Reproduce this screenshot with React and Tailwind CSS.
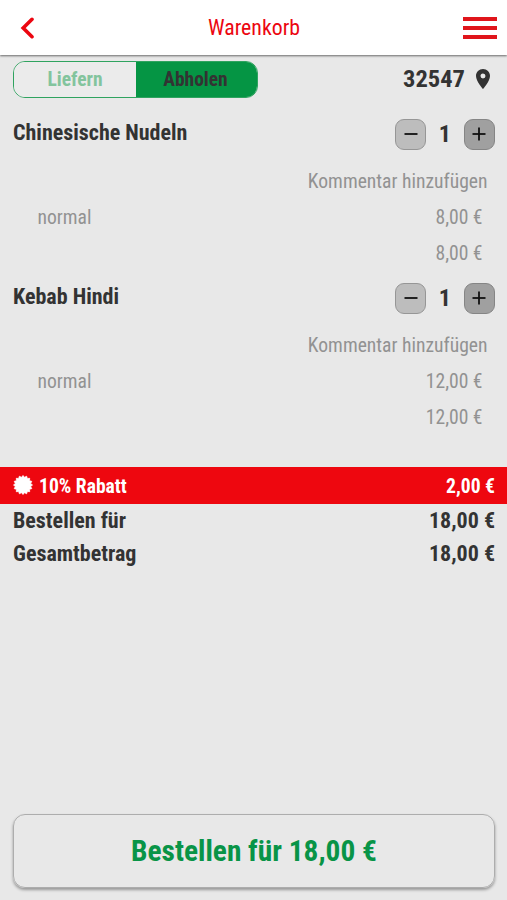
import React, { useState } from 'react';
import { MdLocationOn } from 'react-icons/md';

const initialItems = [
  { id: 1, name: 'Chinesische Nudeln', variant: 'normal', price: 8 },
  { id: 2, name: 'Kebab Hindi', variant: 'normal', price: 12 },
];

const formatPrice = (value) => `${value.toFixed(2).replace('.', ',')} €`;

// Scalloped discount badge: alternating outer and inner points
const badgePoints = [...Array(32)]
  .map((_, index) => {
    const radius = index % 2 === 0 ? 9.5 : 7.8;
    const angle = (index * Math.PI) / 16;
    return `${10 + radius * Math.sin(angle)},${10 - radius * Math.cos(angle)}`;
  })
  .join(' ');

const QuantityButton = ({ type, onClick }) => (
  <button
    onClick={onClick}
    className={`flex h-[31px] w-[31px] items-center justify-center rounded-[9px] border ${
      type === 'plus' ? 'border-[#858585] bg-[#a0a0a0]' : 'border-[#969696] bg-[#bdbdbd]'
    }`}
  >
    <svg viewBox="0 0 14 14" className="h-3.5 w-3.5" stroke="#111" strokeWidth="1.8">
      <path d="M0.5 7h13" />
      {type === 'plus' && <path d="M7 0.5v13" />}
    </svg>
  </button>
);

const CartItem = ({ item, quantity, onChange }) => (
  <div className="h-[164px] pl-[13px] pr-[12.5px] pt-[16.5px]">
    <div className="flex h-[31px] items-center justify-between">
      <h2 className="pb-[3px] text-[22px] font-bold leading-none">{item.name}</h2>
      <div className="flex items-center">
        <QuantityButton type="minus" onClick={() => onChange(Math.max(0, quantity - 1))} />
        <span className="w-[37.5px] pb-[1px] text-center text-2xl font-bold leading-none">{quantity}</span>
        <QuantityButton type="plus" onClick={() => onChange(quantity + 1)} />
      </div>
    </div>
    <div className="text-[19.6px] text-[#929292]">
      <p className="mt-[14px] pr-[7px] text-right leading-9">Kommentar hinzufügen</p>
      <div className="flex justify-between pl-[24.5px] pr-3 leading-9">
        <span>{item.variant}</span>
        <span>{formatPrice(item.price)}</span>
      </div>
      <p className="pr-3 text-right leading-9">{formatPrice(item.price * quantity)}</p>
    </div>
  </div>
);

const SummaryRow = ({ label, value }) => (
  <div className="flex h-[33px] items-center justify-between pl-[13px] pr-3 text-[22px] font-bold">
    <span>{label}</span>
    <span>{value}</span>
  </div>
);

const App = () => {
  const [quantities, setQuantities] = useState({ 1: 1, 2: 1 });

  const subtotal = initialItems.reduce((sum, item) => sum + item.price * quantities[item.id], 0);
  const discount = subtotal * 0.1;
  const total = subtotal - discount;

  return (
    <div className="flex h-[900px] w-[507px] flex-col overflow-hidden bg-[#e8e8e8] font-['Roboto_Condensed','Roboto',sans-serif] text-[#333] [font-stretch:75%]">
      {/* Header */}
      <header className="z-10 flex h-[55px] shrink-0 items-center justify-between bg-white pl-5 pr-[10px] shadow-[0_1px_2px_rgba(0,0,0,0.55)]">
        <button className="w-[25px]">
          <svg
            viewBox="0 0 15 22"
            className="h-[22px] w-[15px]"
            fill="none"
            stroke="#ec0610"
            strokeWidth="3.6"
            strokeLinecap="round"
          >
            <path d="M12 2.3L3.2 11l8.8 8.7" />
          </svg>
        </button>
        <h1 className="pt-[2px] text-[21.8px] text-[#ec0610]">Warenkorb</h1>
        <button className="flex w-[34px] flex-col gap-[5px]">
          <span className="h-1 bg-[#e0151b]" />
          <span className="h-1 bg-[#e0151b]" />
          <span className="h-1 bg-[#e0151b]" />
        </button>
      </header>

      {/* Delivery mode */}
      <div className="flex h-[47px] shrink-0 items-start justify-between pl-[13px] pr-3 pt-[6px]">
        <div className="flex h-[37px] w-[245px] overflow-hidden rounded-[12px] border border-[#2fa35f] text-[19.5px] font-bold">
          <button className="w-[122px] bg-[#ebebeb] text-[#83c49d]">Liefern</button>
          <button className="flex-1 bg-[#059544] pr-[2px]">Abholen</button>
        </div>
        <div className="flex h-[37px] items-center gap-[6px] text-[24.5px] font-bold">
          <span>32547</span>
          <MdLocationOn className="mb-[2px] h-6 w-6" />
        </div>
      </div>

      {/* Items */}
      {initialItems.map((item) => (
        <CartItem
          key={item.id}
          item={item}
          quantity={quantities[item.id]}
          onChange={(value) => setQuantities({ ...quantities, [item.id]: value })}
        />
      ))}

      {/* Discount */}
      <div className="mt-[37px] flex h-[37px] shrink-0 items-center justify-between bg-[#ee070f] pl-[13px] pr-3 text-[19.6px] font-bold text-white">
        <div className="flex items-center gap-[6px]">
          <svg viewBox="0 0 20 20" className="h-5 w-5" fill="currentColor" stroke="currentColor" strokeWidth="0.8" strokeLinejoin="round">
            <polygon points={badgePoints} />
          </svg>
          <span className="pt-[2px]">10% Rabatt</span>
        </div>
        <span className="pt-[2px]">{formatPrice(discount)}</span>
      </div>

      <SummaryRow label="Bestellen für" value={formatPrice(total)} />
      <SummaryRow label="Gesamtbetrag" value={formatPrice(total)} />

      {/* Order button */}
      <div className="mt-auto pl-[13px] pr-3 pb-3">
        <button className="h-[74px] w-full rounded-[12px] border-[1.5px] border-[#adadad] text-[29.4px] font-bold text-[#089447] shadow-[0_2px_3px_rgba(0,0,0,0.35)]">
          Bestellen für {formatPrice(total)}
        </button>
      </div>
    </div>
  );
};

export default App;
